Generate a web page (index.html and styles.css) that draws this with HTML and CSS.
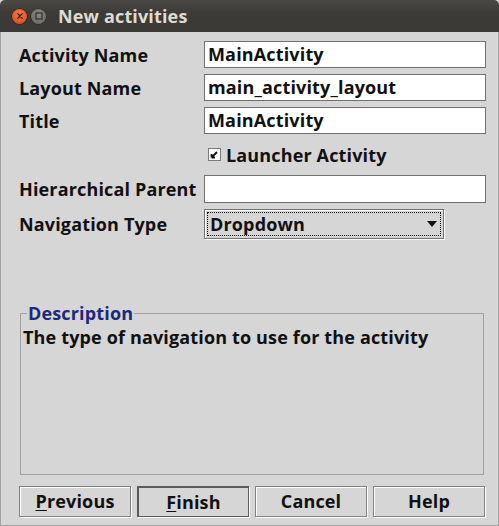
FILE: index.html
```html
<!DOCTYPE html>
<html>
<head>
<meta charset="utf-8">
<link rel="stylesheet" href="styles.css">
</head>
<body>
<div class="window">
  <div class="titlebar">
    <span class="wbtn close">
      <svg width="14" height="14" viewBox="0 0 14 14"><path d="M4.8 4.8 L9.2 9.2 M9.2 4.8 L4.8 9.2" stroke="#3a1a10" stroke-width="1.3" stroke-linecap="round"/></svg>
    </span>
    <span class="wbtn max">
      <svg width="14" height="14" viewBox="0 0 14 14"><rect x="4" y="4" width="6" height="6" fill="none" stroke="#2e2d2a" stroke-width="1.2"/></svg>
    </span>
    <span class="title">New activities</span>
  </div>
  <div class="content">
    <div class="form">
      <label class="lbl">Activity Name</label>
      <div class="field">MainActivity</div>
      <label class="lbl">Layout Name</label>
      <div class="field">main_activity_layout</div>
      <label class="lbl">Title</label>
      <div class="field">MainActivity</div>
      <span class="lbl"></span>
      <div class="check">
        <span class="box"><svg width="13" height="13" viewBox="0 0 13 13"><rect x="0.5" y="0.5" width="12" height="12" fill="#fff" stroke="#7a7a7a"/><path d="M3.5 9.5 L9 4 M3.5 9.5 L3.5 6 M3.5 9.5 L7 9.5" stroke="#111" stroke-width="1.8"/></svg></span>
        <span>Launcher Activity</span>
      </div>
      <label class="lbl">Hierarchical Parent</label>
      <div class="field tall"></div>
      <label class="lbl">Navigation Type</label>
      <div class="select">
        <div class="focus">
          <span>Dropdown</span>
          <svg width="10" height="7" viewBox="0 0 10 7"><path d="M0 0 H10 L5 6 Z" fill="#111"/></svg>
        </div>
      </div>
    </div>
    <fieldset class="desc">
      <legend>Description</legend>
      <p>The type of navigation to use for the activity</p>
    </fieldset>
    <div class="buttons">
      <button class="btn"><u>P</u>revious</button>
      <button class="btn default"><u>F</u>inish</button>
      <button class="btn">Cancel</button>
      <button class="btn">Help</button>
    </div>
  </div>
</div>
</body>
</html>
```

FILE: styles.css
```css
* { box-sizing: border-box; }
html, body { margin: 0; padding: 0; }
body {
  width: 499px;
  height: 526px;
  background: #d6d6d6;
  font-family: "Open Sans", "DejaVu Sans", sans-serif;
  font-weight: 700;
  font-size: 18px;
  letter-spacing: 0.15px;
  color: #111;
  overflow: hidden;
}
.window {
  width: 499px;
  height: 526px;
  display: flex;
  flex-direction: column;
}
.titlebar {
  height: 32px;
  flex: none;
  background: linear-gradient(#4a4945, #3c3b37 40%, #3a3935);
  border-radius: 5px 5px 0 0;
  display: flex;
  align-items: center;
  padding-left: 12px;
}
.wbtn {
  width: 15px;
  height: 15px;
  border-radius: 50%;
  display: flex;
  align-items: center;
  justify-content: center;
  margin-right: 4px;
}
.wbtn.close {
  background: radial-gradient(circle at 50% 35%, #f5834f, #e0501d 70%, #c9410f);
  box-shadow: 0 0 0 0.5px #2a1a12;
}
.wbtn.max {
  background: radial-gradient(circle at 50% 35%, #8a8883, #72706b 70%, #62605b);
  box-shadow: 0 0 0 0.5px #262522;
}
.title {
  color: #dfdbd2;
  margin-left: 8px;
  font-size: 18px;
  line-height: 20px;
}
.content {
  flex: 1;
  display: flex;
  flex-direction: column;
  border: 1px solid #a3a3a3;
  border-top: none;
  padding: 9px 13px 8px 18px;
}
.form {
  display: grid;
  grid-template-columns: 185px 282px;
  grid-template-rows: 27px 27px 27px 29px 28px 30px;
  row-gap: 6px;
  align-items: center;
}
.lbl { white-space: nowrap; }
.field {
  height: 27px;
  background: #fff;
  border: 1px solid #707070;
  padding-left: 3px;
  line-height: 25px;
  white-space: nowrap;
}
.field.tall { height: 28px; }
.check {
  display: flex;
  align-items: center;
  padding-left: 4px;
  gap: 5px;
}
.box { display: flex; }
.select {
  width: 240px;
  height: 30px;
  border: 1px solid #707070;
  box-shadow: 1px 1px 0 #fff, inset 1px 1px 0 #fff;
  padding: 2px;
}
.focus {
  height: 100%;
  border: 1px dotted #111;
  display: flex;
  align-items: center;
  justify-content: space-between;
  padding: 0 3px 0 2px;
}
.desc {
  flex: 1;
  margin: 64px 0 0 1px;
  width: 464px;
  border: 1px solid #a0a0a0;
  padding: 0 2px;
  min-width: 0;
}
.desc legend {
  color: #1b2a7d;
  padding: 0 1px;
  margin-left: 4px;
  line-height: 20px;
}
.desc p {
  margin: 0;
  padding-top: 3px;
  line-height: 22px;
}
.buttons {
  margin-top: 11px;
  display: flex;
  gap: 6px;
}
.btn {
  width: 112px;
  height: 31px;
  font: inherit;
  letter-spacing: inherit;
  color: #111;
  background: #d6d6d6;
  border: 1px solid #808080;
  box-shadow: 1px 1px 0 #fff, inset 1px 1px 0 #fff;
  padding: 0;
  line-height: 27px;
}
.btn.default {
  border: 2px solid #5a5a5a;
  border-right-width: 1px;
  border-bottom-width: 1px;
  box-shadow: 1px 1px 0 #fff;
}
.btn u { text-decoration-thickness: 1px; text-underline-offset: 2px; }
```
